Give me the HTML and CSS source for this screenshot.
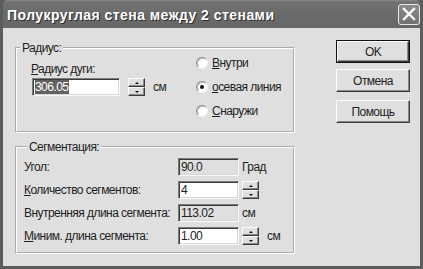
FILE: index.html
```html
<!DOCTYPE html>
<html lang="ru">
<head>
<meta charset="utf-8">
<title>Полукруглая стена между 2 стенами</title>
<link rel="stylesheet" href="styles.css">
</head>
<body>
<div class="window">
  <div class="titlebar">
    <span class="title">Полукруглая стена между 2 стенами</span>
    <span class="close">
      <svg width="14" height="14" viewBox="0 0 14 14"><path d="M2 2 L12 12 M12 2 L2 12" stroke="#fff" stroke-width="2.4" stroke-linecap="square"/></svg>
    </span>
  </div>
  <div class="client">
    <div class="groups">
      <fieldset class="group group-radius">
        <legend>Радиус:</legend>
        <div class="radius-body">
          <div class="radius-left">
            <div class="label"><u>Р</u>адиус дуги:</div>
            <div class="field-row">
              <span class="edit edit-radius"><span class="sel">306.05</span></span>
              <span class="spin"><span class="spin-btn"><i class="up"></i></span><span class="spin-btn"><i class="down"></i></span></span>
              <span class="unit unit-wide">см</span>
            </div>
          </div>
          <div class="radios">
            <div class="radio-row"><span class="radio"></span><span><u>В</u>нутри</span></div>
            <div class="radio-row"><span class="radio checked"></span><span><u>о</u>севая линия</span></div>
            <div class="radio-row"><span class="radio"></span><span><u>С</u>наружи</span></div>
          </div>
        </div>
      </fieldset>
      <fieldset class="group group-seg">
        <legend>Сегментация:</legend>
        <div class="seg-row">
          <span class="seg-label">Угол:</span>
          <span class="edit edit-seg readonly">90.0</span>
          <span class="unit">Град</span>
        </div>
        <div class="seg-row">
          <span class="seg-label"><u>К</u>оличество сегментов:</span>
          <span class="edit edit-seg">4</span>
          <span class="spin"><span class="spin-btn"><i class="up"></i></span><span class="spin-btn"><i class="down"></i></span></span>
        </div>
        <div class="seg-row">
          <span class="seg-label">Внутренняя длина сегмента:</span>
          <span class="edit edit-seg readonly">113.02</span>
          <span class="unit">см</span>
        </div>
        <div class="seg-row">
          <span class="seg-label"><u>М</u>иним. длина сегмента:</span>
          <span class="edit edit-seg">1.00</span>
          <span class="spin"><span class="spin-btn"><i class="up"></i></span><span class="spin-btn"><i class="down"></i></span></span>
          <span class="unit unit-wide">см</span>
        </div>
      </fieldset>
    </div>
    <div class="buttons">
      <div class="btn default"><span class="btn-face">OK</span></div>
      <div class="btn"><span class="btn-face">Отмена</span></div>
      <div class="btn"><span class="btn-face">Помощь</span></div>
    </div>
  </div>
</div>
</body>
</html>
```
FILE: styles.css
```css
* { box-sizing: border-box; }
html, body { margin: 0; padding: 0; background: #5f5f5f; }
body {
  font-family: "Liberation Sans", Arial, sans-serif;
  font-size: 12px;
  letter-spacing: -0.55px;
  color: #1e1e1e;
}
u { text-decoration: underline; text-underline-offset: 1px; }

.window {
  width: 423px;
  height: 269px;
  display: flex;
  flex-direction: column;
  background: #5d5d5d;
  border: 3px solid #5c5c5c;
  border-top: 0;
  border-radius: 6px 6px 0 0;
  overflow: hidden;
}

.titlebar {
  height: 28px;
  flex: none;
  display: flex;
  align-items: center;
  justify-content: space-between;
  margin: 0 -3px;
  padding-left: 7px;
  padding-right: 3px;
  background: linear-gradient(#8a8a8a 0, #707070 2px, #6a6a6a 60%, #676767 100%);
  border-radius: 6px 6px 0 0;
}
.title {
  font-weight: bold;
  font-size: 14px;
  color: #fff;
  text-shadow: 1px 1px 0 #2e2e2e;
  letter-spacing: 0.45px;
  padding-top: 1px;
}
.close {
  width: 22px;
  height: 21px;
  display: flex;
  align-items: center;
  justify-content: center;
  border: 1px solid #e8e8e8;
  border-radius: 3px;
  background: linear-gradient(#8a8a8a, #727272);
}

.client {
  flex: 1;
  display: flex;
  align-items: flex-start;
  background: #dfdfdf;
  padding: 0 0 0 12px;
}

.groups {
  align-self: stretch;
  width: 280px;
  display: flex;
  flex-direction: column;
  gap: 7px;
  padding-top: 13px;
}

.group {
  margin: 0;
  padding: 0;
  min-width: 0;
  border: 2px groove #ffffff;
}
.group legend {
  margin-left: 3px;
  padding: 0 2px;
  line-height: 14px;
}

.group-radius { height: 92px; flex: none; }
.radius-body {
  display: flex;
  padding: 0 0 0 15px;
}
.radius-left {
  width: 164px;
  padding-top: 7px;
}
.label { line-height: 14px; margin-left: -1px; }
.field-row {
  display: flex;
  align-items: center;
  margin-top: 2px;
}

.edit {
  display: flex;
  align-items: center;
  background: #fff;
  border: 1px solid;
  border-color: #7c7c7c #fafafa #fafafa #7c7c7c;
  box-shadow: inset 1px 1px 0 #3a3a3a, inset -1px -1px 0 #d6d6d6;
  padding-left: 2px;
  line-height: 14px;
}
.edit.readonly { background: #dfdfdf; }
.edit-radius { width: 88px; height: 18px; }
.sel { background: #616161; color: #fff; padding: 0 1px 0 0; }

.spin {
  display: flex;
  flex-direction: column;
  width: 17px;
  height: 18px;
  margin-left: 8px;
}
.spin-btn {
  flex: 1;
  display: flex;
  align-items: center;
  justify-content: center;
  background: #dfdfdf;
  border: 1px solid;
  border-color: #fcfcfc #3c3c3c #3c3c3c #fcfcfc;
  box-shadow: inset -1px -1px 0 #8a8a8a;
}
.spin-btn i { display: block; width: 0; height: 0; border-left: 2px solid transparent; border-right: 2px solid transparent; }
.spin-btn i.up { border-bottom: 2px solid #111; }
.spin-btn i.down { border-top: 2px solid #111; }

.unit { margin-left: 3px; }
.unit-wide { margin-left: 8px; }

.radios {
  display: flex;
  flex-direction: column;
  gap: 8px;
}
.radio-row {
  display: flex;
  align-items: center;
  height: 16px;
  gap: 4px;
  white-space: nowrap;
}
.radio {
  width: 12px;
  height: 12px;
  border-radius: 50%;
  background: #fff;
  border: 1px solid;
  border-color: #8a8a8a #f4f4f4 #f4f4f4 #8a8a8a;
  box-shadow: inset 1px 1px 0 #c4c4c4;
  display: flex;
  align-items: center;
  justify-content: center;
}
.radio.checked::after {
  content: "";
  width: 4px;
  height: 4px;
  border-radius: 50%;
  background: #111;
}

.group-seg {
  flex: 1;
  margin-bottom: 12px;
  padding: 4px 0 0 7px;
  display: flex;
  flex-direction: column;
  gap: 5px;
}
.seg-row {
  display: flex;
  align-items: center;
  height: 18px;
  white-space: nowrap;
}
.seg-label { width: 154px; flex: none; }
.edit-seg { width: 61px; height: 18px; }
.seg-row .spin { margin-left: 3px; }

.buttons {
  margin-left: 41px;
  padding-top: 12px;
  display: flex;
  flex-direction: column;
  gap: 6px;
}
.btn {
  width: 74px;
  height: 23px;
  display: flex;
}
.btn-face {
  flex: 1;
  display: flex;
  align-items: center;
  justify-content: center;
  background: #dfdfdf;
  border: 1px solid;
  border-color: #fcfcfc #3a3a3a #3a3a3a #fcfcfc;
  box-shadow: inset -1px -1px 0 #8a8a8a;
}
.btn.default { border: 1px solid #111; }
.btn + .btn + .btn { margin-top: 2px; }
```
